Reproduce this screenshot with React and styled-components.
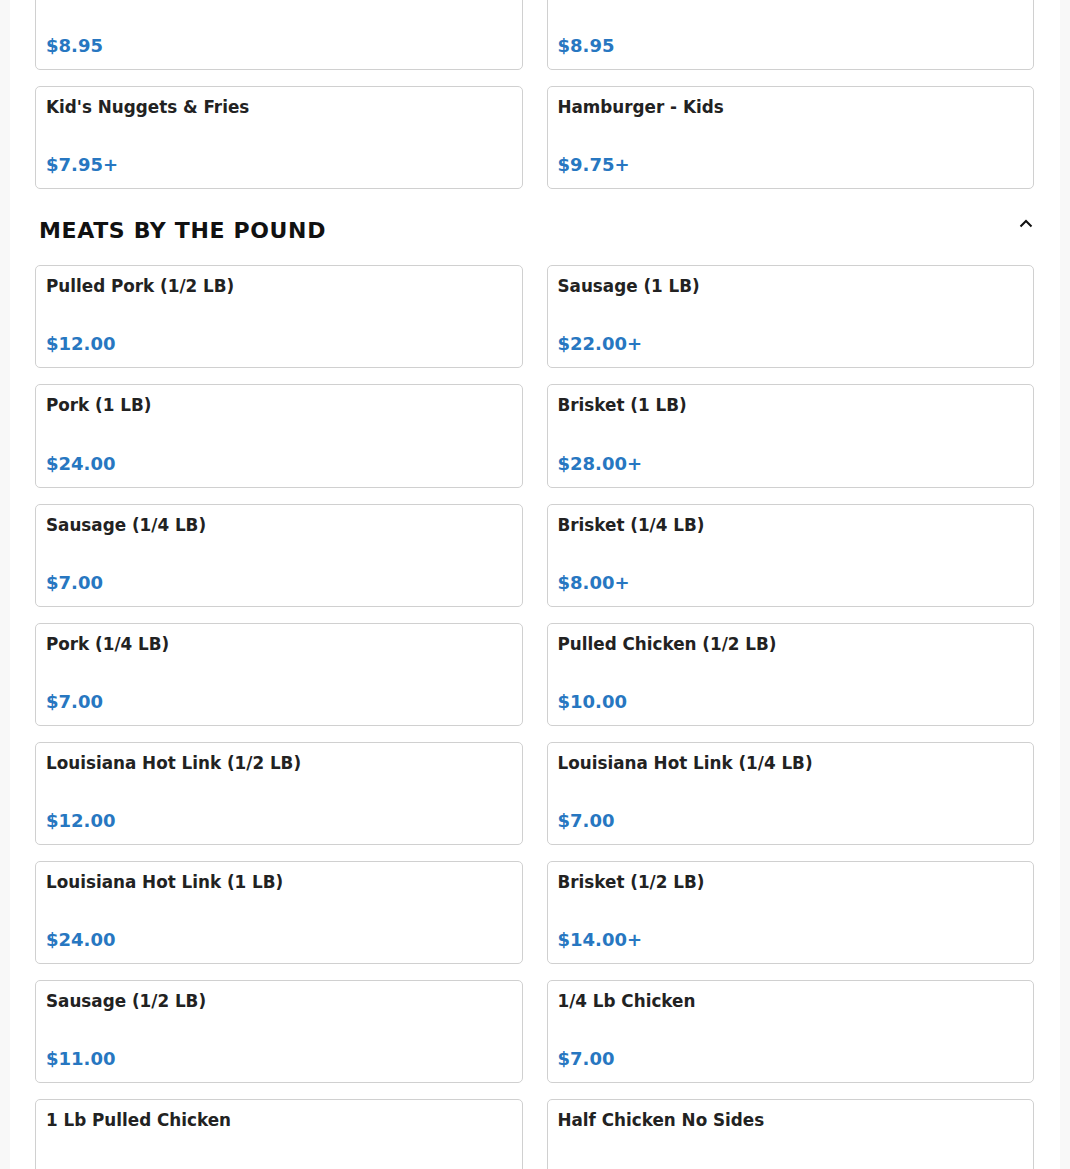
import styled, { createGlobalStyle } from "styled-components";

const GlobalStyle = createGlobalStyle`
    body {
        margin: 0;
        background: #f8f8f8;
        font-family: "DejaVu Sans", sans-serif;
    }
`;

const kidsItems = [
    { name: "Kid's Pulled Pork Sandwich", price: "$8.95" },
    { name: "Kid's Brisket Sandwich", price: "$8.95" },
    { name: "Kid's Nuggets & Fries", price: "$7.95+" },
    { name: "Hamburger - Kids", price: "$9.75+" },
];

const meatItems = [
    { name: "Pulled Pork (1/2 LB)", price: "$12.00" },
    { name: "Sausage (1 LB)", price: "$22.00+" },
    { name: "Pork (1 LB)", price: "$24.00" },
    { name: "Brisket (1 LB)", price: "$28.00+" },
    { name: "Sausage (1/4 LB)", price: "$7.00" },
    { name: "Brisket (1/4 LB)", price: "$8.00+" },
    { name: "Pork (1/4 LB)", price: "$7.00" },
    { name: "Pulled Chicken (1/2 LB)", price: "$10.00" },
    { name: "Louisiana Hot Link (1/2 LB)", price: "$12.00" },
    { name: "Louisiana Hot Link (1/4 LB)", price: "$7.00" },
    { name: "Louisiana Hot Link (1 LB)", price: "$24.00" },
    { name: "Brisket (1/2 LB)", price: "$14.00+" },
    { name: "Sausage (1/2 LB)", price: "$11.00" },
    { name: "1/4 Lb Chicken", price: "$7.00" },
    { name: "1 Lb Pulled Chicken", price: "$20.00" },
    { name: "Half Chicken No Sides", price: "$12.00" },
];

const MenuCard = ({ name, price }) => (
    <StyledCard>
        <StyledName>{name}</StyledName>
        <StyledPrice>{price}</StyledPrice>
    </StyledCard>
);

const App = () => {
    return (
        <>
            <GlobalStyle />
            <StyledPage>
                <StyledMain>
                    <StyledGrid>
                        {kidsItems.map((item) => (
                            <MenuCard key={item.name} {...item} />
                        ))}
                    </StyledGrid>
                    <StyledSectionHeader>
                        <StyledSectionTitle>MEATS BY THE POUND</StyledSectionTitle>
                        <StyledToggle aria-label="Collapse section">
                            <svg width="14" height="9" viewBox="0 0 14 9" fill="none">
                                <path d="M1.5 7.5 7 2l5.5 5.5" stroke="#111" strokeWidth="2" />
                            </svg>
                        </StyledToggle>
                    </StyledSectionHeader>
                    <StyledGrid>
                        {meatItems.map((item) => (
                            <MenuCard key={item.name} {...item} />
                        ))}
                    </StyledGrid>
                </StyledMain>
            </StyledPage>
        </>
    );
};

const StyledPage = styled.div`
    width: 1050px;
    margin-left: 10px;
    min-height: 1169px;
    background: #ffffff;
    overflow: hidden;
`;

const StyledMain = styled.main`
    margin-top: -33px;
    padding: 0 26px 40px 25px;
`;

const StyledGrid = styled.div`
    display: grid;
    grid-template-columns: 1fr 1fr;
    column-gap: 24px;
    row-gap: 16px;
`;

const StyledCard = styled.div`
    box-sizing: border-box;
    height: 103.15px;
    padding: 10px 10px 13px;
    border: 1px solid #d0d0d0;
    border-radius: 5px;
    background: #ffffff;
    display: flex;
    flex-direction: column;
    justify-content: space-between;
`;

const StyledName = styled.h3`
    margin: 0;
    font-size: 16.8px;
    font-weight: 700;
    color: #222222;
`;

const StyledPrice = styled.span`
    font-size: 18px;
    font-weight: 700;
    color: #2777c1;
`;

const StyledSectionHeader = styled.div`
    display: flex;
    align-items: center;
    justify-content: space-between;
    padding: 29px 0 22px 4px;
`;

const StyledSectionTitle = styled.h2`
    margin: 0;
    font-size: 22px;
    font-weight: 700;
    color: #111111;
    letter-spacing: 0.65px;
`;

const StyledToggle = styled.button`
    border: none;
    background: none;
    padding: 0;
    margin-right: 1px;
    margin-top: -14px;
    display: flex;
    cursor: pointer;
`;

export default App;
